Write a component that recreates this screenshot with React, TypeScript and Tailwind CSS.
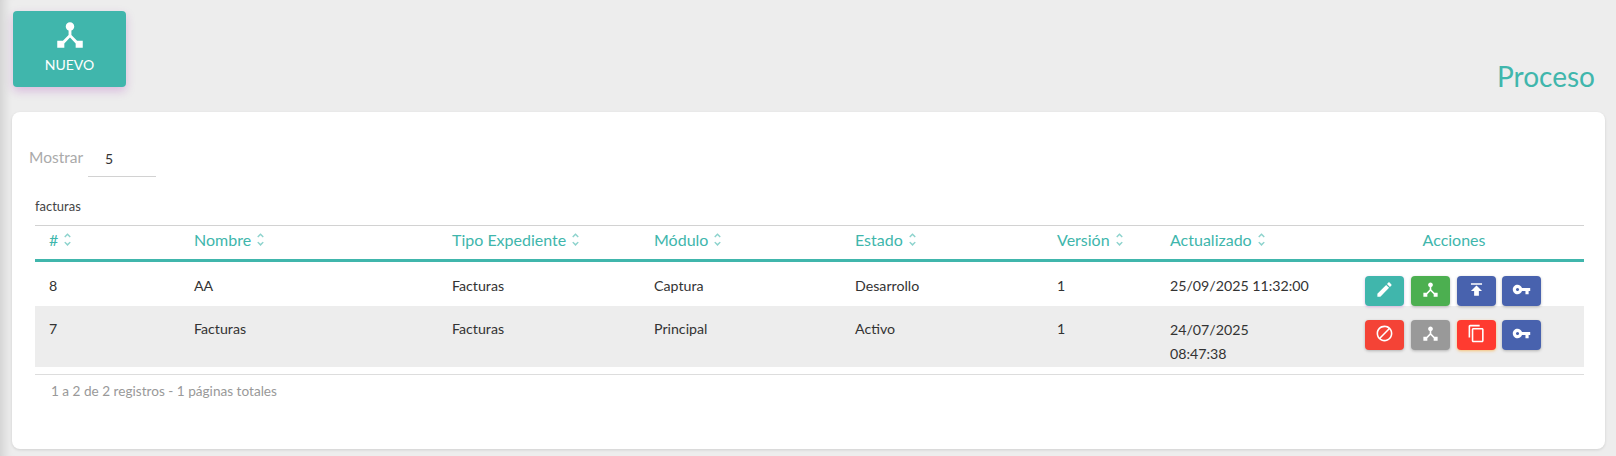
import React from 'react';

const HUB = 'M17 16l-4-4V8.82C14.16 8.4 15 7.3 15 6c0-1.66-1.34-3-3-3S9 4.34 9 6c0 1.3.84 2.4 2 2.82V12l-4 4H3v5h5v-3.05l4-4.2 4 4.2V21h5v-5h-4z';
const EDIT = 'M3 17.25V21h3.75L17.81 9.94l-3.75-3.75L3 17.25zM20.71 7.04c.39-.39.39-1.02 0-1.41l-2.34-2.34c-.39-.39-1.02-.39-1.41 0l-1.83 1.83 3.75 3.75 1.83-1.83z';
const PUBLISH = 'M5 4v2h14V4H5zm0 10h4v6h6v-6h4l-7-7-7 7z';
const KEY = 'M12.65 10C11.83 7.67 9.61 6 7 6c-3.31 0-6 2.69-6 6s2.69 6 6 6c2.61 0 4.83-1.67 5.65-4H17v4h4v-4h2v-4H12.65zM7 14c-1.1 0-2-.9-2-2s.9-2 2-2 2 .9 2 2-.9 2-2 2z';
const BLOCK = 'M12 2C6.48 2 2 6.48 2 12s4.48 10 10 10 10-4.48 10-10S17.52 2 12 2zM4 12c0-4.42 3.58-8 8-8 1.85 0 3.55.63 4.9 1.69L5.69 16.9C4.63 15.55 4 13.85 4 12zm8 8c-1.85 0-3.55-.63-4.9-1.69L18.31 7.1C19.37 8.45 20 10.15 20 12c0 4.42-3.58 8-8 8z';
const COPY = 'M16 1H4c-1.1 0-2 .9-2 2v14h2V3h12V1zm3 4H8c-1.1 0-2 .9-2 2v14c0 1.1.9 2 2 2h11c1.1 0 2-.9 2-2V7c0-1.1-.9-2-2-2zm0 16H8V7h11v14z';
const SORT = 'M12 5.83L15.17 9l1.41-1.41L12 3 7.41 7.59 8.83 9 12 5.83zm0 12.34L8.83 15 7.42 16.41 12 21l4.59-4.59L15.17 15 12 18.17z';

function Icon({ d, className }: { d: string; className: string }) {
  return (
    <svg viewBox="0 0 24 24" fill="currentColor" className={className}>
      <path d={d} />
    </svg>
  );
}

function ActionButton({ d, color }: { d: string; color: string }) {
  return (
    <button className={`flex h-[30px] w-[39px] items-center justify-center rounded-[4px] pb-[4px] text-white ${color}`}>
      <Icon d={d} className="h-[19px] w-[19px]" />
    </button>
  );
}

function HeaderCell({ label, className }: { label: string; className: string }) {
  return (
    <th className={`px-[14px] pb-[6px] text-left font-normal ${className}`}>
      <span className="inline-flex items-center gap-[1px]">
        {label}
        <Icon d={SORT} className="h-[17px] w-[17px] opacity-60" />
      </span>
    </th>
  );
}

export default function App() {
  return (
    <div className="h-[456px] bg-[#ededed] pl-3 pr-[11px] font-['Lato',sans-serif] shadow-[inset_12px_0_10px_-8px_rgba(0,0,0,0.12)]">
      <div className="flex h-[112px] items-start justify-between">
        <button className="ml-px mt-[11px] flex h-[76px] w-[113px] flex-col items-center rounded-[4px] bg-[#40b6ac] pt-[7px] text-white shadow-[0_4px_10px_rgba(156,39,176,0.25)]">
          <Icon d={HUB} className="h-[34px] w-[34px]" />
          <span className="mt-[3px] text-[14px] leading-[20px]">NUEVO</span>
        </button>
        <h1 className="mr-[10px] mt-[58px] text-[28px] leading-[36px] font-normal text-[#40b6ac]">Proceso</h1>
      </div>

      <div className="h-[337px] rounded-lg bg-white pl-[23px] pr-[21px] shadow-[0_1px_3px_rgba(0,0,0,0.12)]">
        <div className="-ml-[6px] flex items-start pt-[33px]">
          <span className="mt-px text-[15.5px] leading-[22px] text-[#aaaaaa]">Mostrar</span>
          <div className="ml-[5px] h-[32px] w-[68px] border-b border-[#d2d2d2] pl-[17px] pt-[3px] text-[14px] leading-[22px] text-[#333333]">5</div>
        </div>
        <div className="mt-[19px] text-[13px] leading-[20px] text-[#444444]">facturas</div>
        <table className="mt-[9px] w-[1549px] table-fixed border-collapse text-[14.2px] text-[#333333]">
          <thead>
            <tr className="h-[35px] border-t border-b-[3px] border-t-[#d2d2d2] border-b-[#40b6ac] text-[16px] text-[#40b6ac]">
              <HeaderCell label="#" className="w-[145px]" />
              <HeaderCell label="Nombre" className="w-[258px]" />
              <HeaderCell label="Tipo Expediente" className="w-[202px]" />
              <HeaderCell label="Módulo" className="w-[201px]" />
              <HeaderCell label="Estado" className="w-[202px]" />
              <HeaderCell label="Versión" className="w-[113px]" />
              <HeaderCell label="Actualizado" className="w-[192px]" />
              <th className="pb-[6px] pr-[24px] text-center font-normal">Acciones</th>
            </tr>
          </thead>
          <tbody>
            <tr className="h-[45px] align-top">
              <td className="px-[14px] pt-[13px]">8</td>
              <td className="px-[14px] pt-[13px]">AA</td>
              <td className="px-[14px] pt-[13px]">Facturas</td>
              <td className="px-[14px] pt-[13px]">Captura</td>
              <td className="px-[14px] pt-[13px]">Desarrollo</td>
              <td className="px-[14px] pt-[13px]">1</td>
              <td className="px-[14px] pt-[13px]">25/09/2025 11:32:00</td>
              <td className="pl-[17px] pt-[14px]">
                <div className="flex gap-[7px]">
                  <ActionButton d={EDIT} color="bg-[#40b6ac] shadow-[0_1px_3px_rgba(156,39,176,0.3)]" />
                  <ActionButton d={HUB} color="bg-[#4caf50] shadow-[0_1px_3px_rgba(0,0,0,0.25)]" />
                  <ActionButton d={PUBLISH} color="bg-[#4862ae] shadow-[0_1px_3px_rgba(0,0,0,0.25)]" />
                  <div className="-ml-px">
                    <ActionButton d={KEY} color="bg-[#4862ae] shadow-[0_1px_3px_rgba(0,0,0,0.25)]" />
                  </div>
                </div>
              </td>
            </tr>
            <tr className="h-[61px] bg-[#ededed] align-top">
              <td className="px-[14px] pt-[12px]">7</td>
              <td className="px-[14px] pt-[12px]">Facturas</td>
              <td className="px-[14px] pt-[12px]">Facturas</td>
              <td className="px-[14px] pt-[12px]">Principal</td>
              <td className="px-[14px] pt-[12px]">Activo</td>
              <td className="px-[14px] pt-[12px]">1</td>
              <td className="px-[14px] pt-[12px] leading-[24px]">
                <div className="w-[100px]">24/07/2025 08:47:38</div>
              </td>
              <td className="pl-[17px] pt-[14px]">
                <div className="flex gap-[7px]">
                  <ActionButton d={BLOCK} color="bg-[#f44336] shadow-[0_1px_3px_rgba(0,0,0,0.25)]" />
                  <ActionButton d={HUB} color="bg-[#999999] shadow-[0_1px_3px_rgba(0,0,0,0.25)]" />
                  <ActionButton d={COPY} color="bg-[#ff3b30] shadow-[0_1px_3px_rgba(255,152,0,0.5)]" />
                  <div className="-ml-px">
                    <ActionButton d={KEY} color="bg-[#4862ae] shadow-[0_1px_3px_rgba(0,0,0,0.25)]" />
                  </div>
                </div>
              </td>
            </tr>
          </tbody>
        </table>
        <div className="mt-[7px] w-[1549px] border-t border-[#dddddd] pl-4 pt-[6px] text-[13.6px] leading-[20px] text-[#999999]">
          1 a 2 de 2 registros - 1 páginas totales
        </div>
      </div>
    </div>
  );
}
